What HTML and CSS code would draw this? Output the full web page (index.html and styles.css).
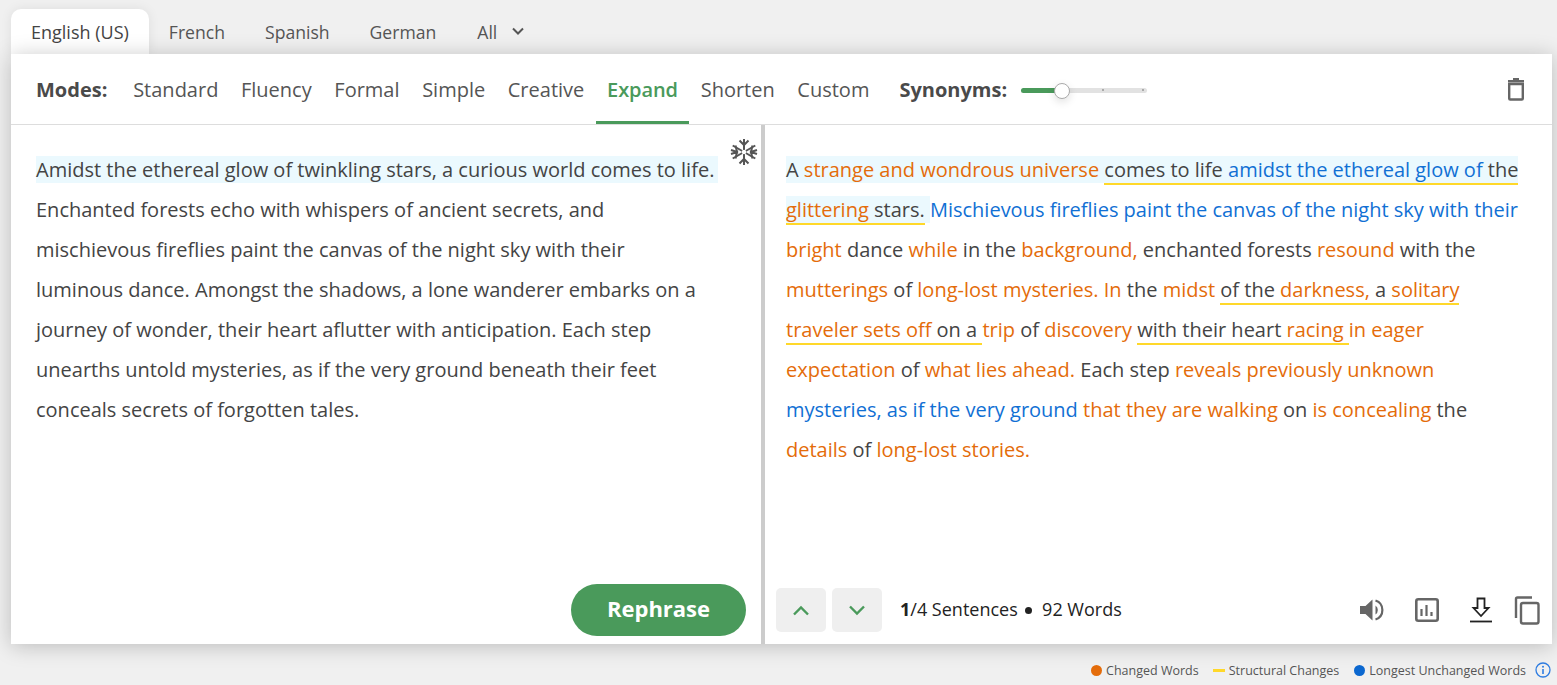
FILE: index.html
```html
<!DOCTYPE html>
<html lang="en">
<head>
<meta charset="utf-8">
<title>Paraphraser</title>
<link rel="stylesheet" href="styles.css">
</head>
<body>
<div class="app">
  <nav class="tabs">
    <span class="tab active">English (US)</span>
    <span class="tab">French</span>
    <span class="tab">Spanish</span>
    <span class="tab">German</span>
    <span class="tab all">All
      <svg class="caret" width="14" height="9" viewBox="0 0 14 9"><path d="M2 1.500l5 5 5-5" fill="none" stroke="#555" stroke-width="2"/></svg>
    </span>
  </nav>
  <main class="card">
    <header class="toolbar">
      <b class="label">Modes:</b>
      <div class="modes">
        <span class="mode">Standard</span>
        <span class="mode">Fluency</span>
        <span class="mode">Formal</span>
        <span class="mode">Simple</span>
        <span class="mode">Creative</span>
        <span class="mode current">Expand</span>
        <span class="mode">Shorten</span>
        <span class="mode">Custom</span>
      </div>
      <b class="label syn">Synonyms:</b>
      <div class="slider">
        <span class="fill"></span>
        <span class="tick t1"></span>
        <span class="tick t2"></span>
        <span class="thumb"></span>
      </div>
      <svg class="trash" width="20" height="24" viewBox="0 0 20 24"><path d="M3.200 7h13.600v14.500a1 1 0 0 1-1 1H4.200a1 1 0 0 1-1-1z" fill="none" stroke="#666" stroke-width="2.400"/><path d="M2 3h16v2.400H2zM7 1h6v2H7z" fill="#666"/></svg>
    </header>
    <div class="panes">
      <section class="pane left">
        <svg class="freeze" width="28" height="28" viewBox="0 0 28 28"><g fill="none" stroke="#555" stroke-width="2"><path d="M14 1v26M2.700 7.500l22.600 13M2.700 20.500l22.600-13"/><path d="M9.500 2.500l4.500 4.500 4.500-4.500M9.500 25.500l4.500-4.500 4.500 4.500M1 12l6 2-1.500-6.500M27 16l-6-2 1.500 6.500M1 16l6-2-1.500 6.500M27 12l-6 2 1.500-6.500"/></g><circle cx="14" cy="14" r="2.200" fill="#fff"/></svg>
        <p class="text"><span class="hl">Amidst the ethereal glow of twinkling stars, a curious world comes to life.</span> Enchanted forests echo with whispers of ancient secrets, and mischievous fireflies paint the canvas of the night sky with their luminous dance. Amongst the shadows, a lone wanderer embarks on a journey of wonder, their heart aflutter with anticipation. Each step unearths untold mysteries, as if the very ground beneath their feet conceals secrets of forgotten tales.</p>
        <div class="left-foot"><button class="rephrase">Rephrase</button></div>
      </section>
      <section class="pane right">
        <p class="text"><span class="hl">A <i class="o">strange and wondrous universe</i> <span class="u">comes to life <i class="b">amidst the ethereal glow of</i> the <i class="o">glittering</i> stars.</span> </span><i class="b">Mischievous fireflies paint the canvas of the night sky with their</i> <i class="o">bright</i> dance <i class="o">while</i> in the <i class="o">background,</i> enchanted forests <i class="o">resound</i> with the <i class="o">mutterings</i> of <i class="o">long-lost mysteries. In</i> the <i class="o">midst</i> <span class="u">of the <i class="o">darkness,</i> a <i class="o">solitary traveler sets off</i> on a </span><i class="o">trip</i> of <i class="o">discovery</i> <span class="u">with their heart <i class="o">racing</i> </span><i class="o">in eager expectation</i> of <i class="o">what lies ahead.</i> Each step <i class="o">reveals previously unknown</i> <i class="b">mysteries, as if the very ground</i> <i class="o">that they are walking</i> on <i class="o">is concealing</i> the <i class="o">details</i> of <i class="o">long-lost stories.</i></p>
        <footer class="right-foot">
          <button class="nav"><svg width="18" height="11" viewBox="0 0 18 11"><path d="M2 9.500l7-7 7 7" fill="none" stroke="#4a9a5b" stroke-width="2.400"/></svg></button>
          <button class="nav"><svg width="18" height="11" viewBox="0 0 18 11"><path d="M2 1.500l7 7 7-7" fill="none" stroke="#4a9a5b" stroke-width="2.400"/></svg></button>
          <span class="count"><b>1</b>/4 Sentences <em class="dot"></em> 92 Words</span>
          <div class="actions">
            <svg class="a-speaker" width="26" height="26" viewBox="0 0 26 26"><path d="M1 9v8h5.500l7 6.500V2.500l-7 6.500z" fill="#666"/><path d="M16.500 8.500a5.500 5.500 0 0 1 0 9z" fill="#666"/><path d="M16.500 3.500a10 10 0 0 1 0 19" fill="none" stroke="#666" stroke-width="2.200"/></svg>
            <svg class="a-chart" width="24" height="24" viewBox="0 0 24 24"><rect x="1.300" y="1.300" width="21.400" height="21.400" rx="2" fill="none" stroke="#666" stroke-width="2.600"/><path d="M6.500 11v7M11.500 7v11M16.500 14v4" stroke="#666" stroke-width="2.200"/></svg>
            <svg class="a-down" width="22" height="26" viewBox="0 0 22 26"><path d="M7.500 1.500h7v9.500h4L11 19 3.500 11h4z" fill="none" stroke="#222" stroke-width="1.800"/><path d="M0 24.500h22" stroke="#222" stroke-width="1.800"/></svg>
            <svg class="a-copy" width="26" height="29" viewBox="0 0 26 29"><path d="M2 22V3a1.500 1.500 0 0 1 1.500-1.500H18" fill="none" stroke="#666" stroke-width="2.400"/><rect x="7" y="7" width="17.500" height="20.500" rx="2" fill="none" stroke="#666" stroke-width="2.400"/></svg>
          </div>
        </footer>
      </section>
    </div>
  </main>
  <footer class="legend">
    <span class="key"><em class="k-dot orange"></em>Changed Words</span>
    <span class="key k-mid"><em class="k-line"></em>Structural Changes</span>
    <span class="key"><em class="k-dot blue"></em>Longest Unchanged Words</span>
    <svg class="info" width="16" height="16" viewBox="0 0 16 16"><circle cx="8" cy="8" r="7" fill="none" stroke="#2f7de1" stroke-width="1.300"/><path d="M8 7v5" stroke="#2f7de1" stroke-width="1.600"/><circle cx="8" cy="4.700" r="1" fill="#2f7de1"/></svg>
  </footer>
</div>
</body>
</html>
```
FILE: styles.css
```css
* { box-sizing: border-box; }
html, body { margin: 0; height: 100%; overflow: hidden; }
body { background: #f0f0f0; font-family: "Open Sans", sans-serif; color: #444; }
.app { padding: 9px 5px 0 11px; }
.tabs { display: flex; height: 45px; position: relative; }
.tab { display: flex; align-items: center; padding: 0 20px; font-size: 17.600px; color: #555; }
.tab.active { background: #fff; color: #444; font-size: 18px; font-weight: 500; border-radius: 10px 10px 0 0; box-shadow: 0 0 12px rgba(0, 0, 0, .08); }
.caret { margin-left: 14px; }
.all { padding-left: 21px; }
.card { height: 590px; background: #fff; box-shadow: 0 2px 20px rgba(0, 0, 0, .22); display: flex; flex-direction: column; position: relative; }
.toolbar { height: 71px; flex: none; display: flex; align-items: center; padding-left: 25px; border-bottom: 1px solid #ddd; font-size: 20px; }
.label { font-weight: 700; color: #4a4a4a; padding-top: 1px; }
.modes { display: flex; height: 70px; margin-left: 14.500px; }
.mode { display: flex; align-items: center; padding: 3px 11.300px 0; color: #555; border-bottom: 2px solid transparent; }
.mode.current { color: #4a9a5b; font-weight: 600; letter-spacing: -.1px; padding-top: 4px; padding-left: 11.500px; padding-right: 11.500px; border-bottom: 3px solid #4a9a5b; }
.syn { margin-left: 18.700px; }
.slider { width: 126px; height: 5px; margin-left: 14px; margin-top: 2px; background: #e2e2e2; border-radius: 3px; position: relative; }
.fill { position: absolute; left: 0; top: 0; bottom: 0; width: 36px; background: #4a9a5b; border-radius: 3px 0 0 3px; }
.tick { position: absolute; top: 1.500px; width: 2px; height: 2px; background: #aaa; }
.t1 { left: 81px; }
.t2 { left: 121px; }
.thumb { position: absolute; left: 33px; top: -5px; width: 16px; height: 16px; border-radius: 50%; background: #fff; border: 1px solid #aaa; box-shadow: 0 3px 8px rgba(0, 0, 0, .12); }
.trash { margin-left: auto; margin-right: 26px; }
.panes { flex: 1; display: flex; min-height: 0; }
.pane { display: flex; flex-direction: column; position: relative; }
.left { width: 754px; border-right: 4px solid #ccc; padding: 25px 15px 8px 25px; }
.left .text { padding-right: 31px; }
.left .hl { padding-right: 4px; margin-right: -4px; white-space: nowrap; }
.right { flex: 1; padding: 25px 25px 12px 21px; }
.text { margin: 0; flex: 1; font-size: 20px; line-height: 40px; color: #444; }
.hl { background: #ebf9fe; }
.text i { font-style: normal; }
.o { color: #e46c0a; }
.b { color: #1170d4; }
.u { border-bottom: 2px solid #ffd82a; }
.freeze { position: absolute; right: 3px; top: 13px; }
.left-foot { display: flex; justify-content: flex-end; }
.rephrase { width: 175px; height: 52px; padding-bottom: 6px; border: 0; border-radius: 26px; background: #4a9a5b; color: #fff; font: 700 22px "Open Sans", sans-serif; }
.right-foot { display: flex; align-items: center; margin-left: -10px; }
.nav { width: 50px; height: 44px; margin-right: 6px; border: 0; border-radius: 5px; background: #efefef; display: flex; align-items: center; justify-content: center; }
.count { margin-left: 12px; padding-bottom: 2px; font-size: 18px; font-weight: 500; color: #222; white-space: nowrap; }
.count b { font-weight: 700; }
.dot { display: inline-block; width: 7px; height: 7px; margin: 0 5px 0 3px; border-radius: 50%; background: #222; vertical-align: 2px; }
.actions { margin-left: auto; margin-right: -13px; display: flex; align-items: center; gap: 28px; }
.a-speaker { margin-right: 2px; }
.a-down { margin-left: 3px; }
.a-copy { margin-left: -6px; }
.legend { height: 52px; padding-right: 1px; display: flex; align-items: center; justify-content: flex-end; font-size: 12.500px; color: #555; }
.key { display: flex; align-items: center; margin-right: 14px; }
.k-mid { margin-right: 15px; }
.k-dot { width: 11px; height: 11px; border-radius: 50%; margin-right: 4px; }
.orange { background: #e46c0a; }
.blue { background: #0c68d0; }
.k-line { width: 12px; height: 3px; margin-right: 4px; background: #ffd82a; }
.info { margin-left: -5px; }
```
